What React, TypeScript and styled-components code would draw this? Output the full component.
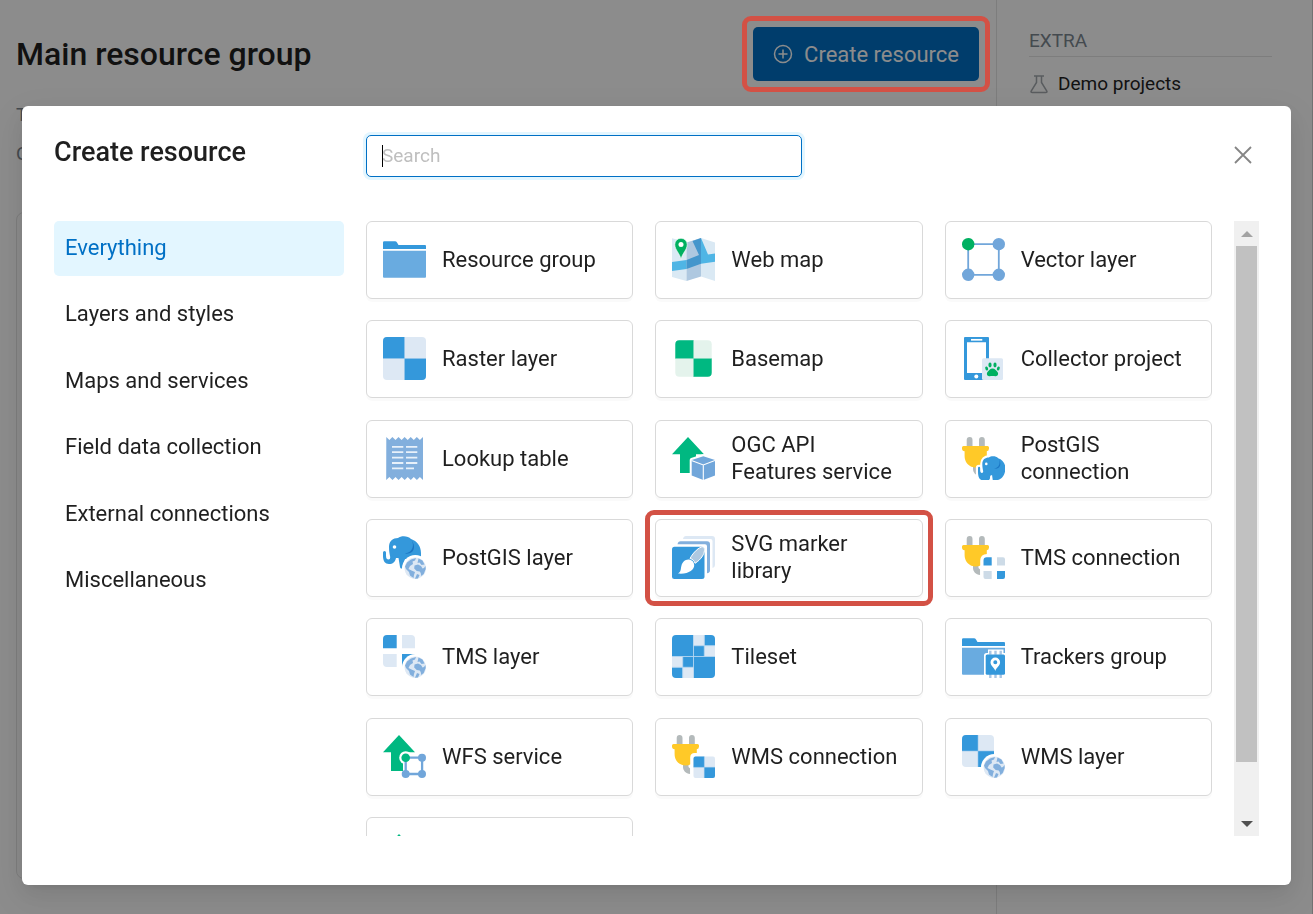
import React, { useRef } from "react";
import styled, { createGlobalStyle } from "styled-components";

const GlobalStyle = createGlobalStyle`
  *, *::before, *::after { box-sizing: border-box; }
  body {
    margin: 0;
    background: #fff;
    color: #1f1f1f;
    font-family: Roboto, "Liberation Sans", sans-serif;
    font-size: 22px;
    line-height: 27px;
  }
  button, input { font: inherit; color: inherit; }
`;

/* ---------- page behind the dialog ---------- */

const Page = styled.div`
  display: flex;
  min-height: 100vh;
  border-right: 1px solid #d0d0d0;
`;

const Main = styled.main`
  flex: 1;
  display: flex;
  flex-direction: column;
  padding: 27px 17px 35px 16px;
  border-right: 1px solid #e4e4e4;
`;

const PageHeader = styled.header`
  display: flex;
  justify-content: space-between;
  align-items: center;
`;

const PageTitle = styled.h1`
  margin: 0;
  font-size: 32px;
  line-height: 40px;
  font-weight: 500;
`;

const Highlighted = styled.div`
  position: relative;
`;

const HighlightRing = styled.span<{ $x: number; $y: number }>`
  position: absolute;
  z-index: 3;
  inset: ${({ $x, $y }) => `-${$y}px -${$x}px`};
  border: 5px solid #d35145;
  border-radius: 9px;
  pointer-events: none;
`;

const PrimaryButton = styled.button`
  display: flex;
  align-items: center;
  gap: 11px;
  height: 54px;
  padding: 0 20px;
  border: 0;
  border-radius: 5px;
  background: #0070c5;
  color: #fff;
`;

const Details = styled.dl`
  display: flex;
  flex-direction: column;
  gap: 12px;
  margin: 20px 0 0;
  font-size: 19px;
  color: #7c8790;
`;

const ContentPanel = styled.section`
  flex: 1;
  margin-top: 45px;
  border: 1px solid #e4e4e4;
  border-radius: 8px;
`;

const Aside = styled.aside`
  width: 315px;
  padding: 27px 40px 0 32px;
  font-size: 19px;
`;

const AsideTitle = styled.h2`
  margin: 0 0 13px;
  padding-bottom: 2px;
  border-bottom: 1px solid #e4e4e4;
  font-size: 19px;
  font-weight: 400;
  color: #7c8790;
`;

const AsideLink = styled.a`
  display: flex;
  align-items: center;
  gap: 9px;
  color: inherit;
  text-decoration: none;
`;

/* ---------- dialog ---------- */

const Overlay = styled.div`
  position: fixed;
  inset: 0;
  z-index: 1;
  display: flex;
  padding: 106px 22px 29px;
  background: rgba(0, 0, 0, 0.45);
`;

const Dialog = styled.div`
  flex: 1;
  min-width: 0;
  display: flex;
  flex-direction: column;
  gap: 44px;
  padding: 29px 32px 49px;
  border-radius: 6px;
  background: #fff;
  box-shadow: 0 8px 22px rgba(0, 0, 0, 0.08), 0 4px 8px -5px rgba(0, 0, 0, 0.12),
    0 12px 38px 11px rgba(0, 0, 0, 0.05);
`;

const DialogHeader = styled.header`
  display: grid;
  grid-template-columns: 290px 436px 1fr;
  column-gap: 22px;
`;

const DialogTitle = styled.h2`
  margin: 0;
  font-size: 27px;
  line-height: 34px;
  font-weight: 500;
`;

const SearchBox = styled.div`
  position: relative;
`;

const SearchInput = styled.input`
  display: block;
  width: 100%;
  height: 42px;
  padding: 0 15px 2px;
  border: 1px solid #0070c5;
  border-radius: 5px;
  outline: 0;
  box-shadow: 0 0 0 3px #e3f6ff;
  font-size: 19px;
  &::placeholder { color: #bfbfbf; opacity: 1; }
`;

const Caret = styled.span`
  position: absolute;
  left: 16px;
  top: 10px;
  width: 1px;
  height: 22px;
  background: #000;
`;

const CloseButton = styled.button`
  justify-self: end;
  display: grid;
  place-items: center;
  width: 32px;
  height: 40px;
  padding: 0;
  border: 0;
  background: none;
  color: #858585;
`;

const DialogBody = styled.div`
  flex: 1;
  min-height: 0;
  display: flex;
  gap: 22px;
`;

const Categories = styled.nav`
  display: flex;
  flex-direction: column;
  justify-content: space-between;
  width: 290px;
  height: 387px;
`;

const Category = styled.button<{ $active?: boolean }>`
  height: 55px;
  padding: 0 11px 2px;
  border: 0;
  border-radius: 5px;
  text-align: left;
  background: ${({ $active }) => ($active ? "#e3f6ff" : "none")};
  color: ${({ $active }) => ($active ? "#0070c5" : "inherit")};
`;

const Scroller = styled.div`
  flex: 1;
  overflow-y: auto;
  scrollbar-width: none;
`;

const CardGrid = styled.div`
  display: grid;
  grid-template-columns: repeat(3, minmax(0, 1fr));
  grid-auto-rows: 78px;
  column-gap: 22px;
  align-content: space-between;
  height: 674px;
`;

const Card = styled.button`
  position: relative;
  display: flex;
  align-items: center;
  gap: 16px;
  padding: 0 20px 1px 16px;
  border: 1px solid #d9d9d9;
  border-radius: 6px;
  background: #fff;
  box-shadow: 0 3px 0 rgba(0, 0, 0, 0.02);
  text-align: left;
`;

const CardIcon = styled.svg`
  flex: none;
  width: 43px;
  height: 43px;
`;

const Scrollbar = styled.div`
  display: flex;
  flex-direction: column;
  width: 25px;
  background: #f0f0f0;
`;

const ScrollArrow = styled.button`
  display: grid;
  place-items: center;
  height: 25px;
  padding: 0;
  border: 0;
  background: none;
`;

const ScrollTrack = styled.div`
  flex: 1;
  display: flex;
  padding: 0 2px 49px;
`;

const ScrollThumb = styled.div`
  flex: 1;
  background: #c1c1c1;
`;

/* ---------- icon drawings, on a 43 unit canvas ---------- */

const BLUE = "#3498db";
const PALE = "#dde8f4";
const SOFT = "#71a6da";
const GREEN = "#00b881";

const Folder = () => (
  <>
    <path fill={BLUE} d="M0 11V4.5Q0 3.2 1.3 3.2H12q1.300 0 2 1.300L15.500 7H42q1 0 1 1v3z" />
    <path fill="#69abe0" d="M0 12.700h43V38.700q0 1-1 1H1q-1 0-1-1z" />
  </>
);

const Tiles = ({ x = 0, y = 0, size = 43, r = 4, dark = BLUE, light = PALE, line = "#93c4ea" }) => {
  const h = size / 2;
  return (
    <g transform={`translate(${x} ${y})`}>
      <rect width={size} height={size} rx={r} fill={light} />
      <path fill={dark} d={`M0 ${h}V${r}Q0 0 ${r} 0H${h}V${size}H${size - r}Q${size} ${size} ${size} ${size - r}V${h}z`} />
      <path stroke={line} strokeWidth={size / 54} d={`M${h} 0V${size}M0 ${h}H${size}`} />
    </g>
  );
};

const Globe = () => (
  <>
    <circle cx="32.300" cy="32.300" r="13.300" fill="#fff" />
    <circle cx="32.300" cy="32.300" r="10.700" fill={PALE} />
    <path
      fill="#82afdd"
      d="M24 26.500l4-3 5-1.500-1 2.500-2.500 1 .5 2.500-3 2-1.500 3 3 1.500 3.500 1.500-1 3-.5 3-3.500-2.500-1-3.500-3-3-1-2.500zM35.500 22.500l4 2 2 4-3 .5-2-2.500-2 .5zM31.500 29.500l3.500-1 3 1.500 1.500 2.500 1.500-.5 1.500-2 .2 3-2 5-2.500 2-.5-3-1-1.500-3-.5-2.500-2.500zM34 38l2.500 1-1.500 3.500-3 .3z"
    />
  </>
);

const ELEPHANT =
  "M0 16.500a1.500 1.500 0 0 1 3 0v3c0 3 1 4 2.500 4s2-1 1.500-3.500C6.500 17 6 15 6 11C6 5 10 2 15 2C18-.5 25-.5 28 3C34 5 38 10 38 17";

const ElephantFace = () => (
  <>
    <path fill="#1b76c4" d="M27.500 2.800c5 6 2 14-5.500 14.700 7.500 1.500 13-5.500 5.500-14.700z" />
    <circle cx="11.500" cy="11" r="1.800" fill="#fff" />
  </>
);

const Plug = () => (
  <>
    <path fill="#b4babb" d="M4.700 10V3a2.900 2.900 0 0 1 5.800 0v7zM17 10V3a2.900 2.900 0 0 1 5.800 0v7zM11 29.500h5.500v2.500l1.700 1.500v5.500c-4.500-.5-7.200-3.500-7.200-7z" />
    <path fill="#ffc928" d="M1.500 9h24a1.500 1.500 0 0 1 1.500 1.500v1q0 2.500-2.200 2.700V19c0 7-5 11.500-11.100 11.500S2.600 26 2.600 19v-4.800Q0 14 0 11.500v-1A1.500 1.500 0 0 1 1.500 9z" />
  </>
);

const Arrow = () => <path fill={GREEN} d="M16 0l16 17.300h-8V36H8V17.300H0z" />;

const ICONS: Record<string, React.ReactNode> = {
  folder: <Folder />,
  webmap: (
    <>
      <path fill="#dae9f4" d="M0 .3L14.500 4v39L0 39zM29 0l14 4.500V43l-14-4.500z" />
      <path fill="#aec8e0" d="M14.500 4.500L29 0v38.500L14.500 43z" />
      <path fill="#4fb5e5" d="M0 24l14.500-2v9L0 33zM29 0l7 16.500 7-1v8.300l-14 2z" />
      <path fill="#4496cc" d="M20.500 3L29 0v25.700L14.500 31v-9L27 17z" />
      <path fill="#00b061" stroke="#fff" strokeWidth=".6" d="M9 21.500C8 15.500 2.800 12 2.800 6.500a6.200 6.200 0 0 1 12.400 0C15.200 12 10 15.500 9 21.500z" />
      <circle cx="9" cy="6.500" r="2.500" fill="#fff" />
    </>
  ),
  vector: (
    <>
      <path fill="none" stroke={SOFT} strokeWidth="1.800" d="M6.200 6.200h30.600v30.600H6.200z" />
      <path stroke={SOFT} strokeWidth="12.400" strokeLinecap="round" d="M36.800 6.200h0M6.200 36.800h0M36.800 36.800h0" />
      <circle cx="6.200" cy="6.200" r="6.200" fill="#00b061" />
    </>
  ),
  raster: <Tiles />,
  basemap: <Tiles x={3.3} y={3.3} size={36.4} dark={GREEN} light="#e4f3ec" line="#7fd8bb" />,
  collector: (
    <>
      <path fill={BLUE} fillRule="evenodd" d="M3 0h23q1 0 1 1v41q0 1-1 1H3q-1 0-1-1V1q0-1 1-1zM5 5.300V36h19V5.300z" />
      <path stroke="#fff" strokeWidth="1.700" d="M9 2.800h11.300" />
      <circle cx="14.300" cy="39.600" r="2" fill="#fff" />
      <rect x="20" y="21.300" width="21" height="21.700" rx="1.500" fill={PALE} />
      <g fill="#00b061">
        <path d="M30.500 31.500c2.500 0 3.500 2 5 3.500 1.500 2 0 4.500-2 4.200-2-.4-4-.4-6 0-2 .3-3.500-2.200-2-4.200 1.500-1.500 2.500-3.500 5-3.500z" />
        <ellipse cx="28" cy="28" rx="1.600" ry="2.400" />
        <ellipse cx="33" cy="28" rx="1.600" ry="2.400" />
        <ellipse cx="24.700" cy="31.500" rx="1.400" ry="2" transform="rotate(-20 24.700 31.500)" />
        <ellipse cx="36.300" cy="31.500" rx="1.400" ry="2" transform="rotate(20 36.300 31.500)" />
      </g>
    </>
  ),
  lookup: (
    <>
      <path
        fill="#82afdd"
        d="M3.300 0l3.100 3 3-3 3.100 3 3-3 3.100 3 3-3 3.100 3 3-3 3.100 3 3-3 3.100 3L40 0v43l-3.100-3-3 3-3.100-3-3 3-3.100-3-3 3-3.100-3-3 3-3.100-3-3 3-3.100-3-3.200 3z"
      />
      <path stroke="#e8f1fa" strokeWidth="1.800" d="M9 9.800h11.300M23 9.800h11.300M9 15.200h11.300M23 15.200h11.300M9 20.600h11.300M23 20.600h11.300M9 26h11.300M23 26h11.300M9 31.400h11.300M23 31.400h8" />
    </>
  ),
  ogc: (
    <>
      <Arrow />
      <path fill={SOFT} stroke="#fff" strokeWidth="4" strokeLinejoin="round" d="M31.300 19.200L43 23v15.500L31.300 43 19.700 38.500V23z" />
      <path fill={SOFT} d="M31.300 19.200L43 23v15.500L31.300 43 19.700 38.500V23z" />
      <path fill="none" stroke="#fff" strokeWidth="1.100" d="M19.500 23.500L31.300 28 43 23.500M31.300 28v15" />
    </>
  ),
  postgisConnection: (
    <>
      <Plug />
      <g transform="translate(16 19) scale(.72)">
        <path fill={BLUE} stroke="#fff" strokeWidth="6" d={ELEPHANT + "C38 25 35 32 24 33H20v-5h-3v5h-6c-7 1-11-3-11-10z"} />
        <path fill={BLUE} d={ELEPHANT + "C38 26 33 33.500 25 33.500H20.500l-1-7-2.500 1-.5 4q-.5 2-2.500 2H6C2 33.500 0 29 0 22z"} />
        <ElephantFace />
      </g>
    </>
  ),
  postgisLayer: (
    <>
      <path fill={BLUE} d={ELEPHANT + "v6H22l-2 8c-.5 2-2.500 2-3 0L15.500 22H13c-1 4-3 6-7 6C2 28 0 25 0 20z"} />
      <ElephantFace />
      <Globe />
    </>
  ),
  svgLibrary: (
    <>
      <path fill={PALE} d="M11 3q.5-3 3-3H40q3 0 3 3v26q0 2.500-2.500 3V5q0-2-2-2z" />
      <path fill="#82afdd" d="M5.500 8.300q.5-3 3-3H35q3 0 3 3v26q0 2.500-3 3V10.300q0-2-2-2z" />
      <rect y="10.700" width="32.500" height="32.300" rx="2.500" fill={BLUE} />
      <path fill="#aec8e0" stroke="#fff" strokeWidth="1" d="M18 22.500C21.500 16 27 11 31 10.700c2.500 1.300 1.500 6.300-.5 9.300-1.800 3-4.500 5.500-7.500 7.300-.5-2.300-2.500-4.300-5-4.800z" />
      <path fill="#fff" d="M17.200 23.500c3 .5 4.800 2.500 5 5.500.2 5-6 9.500-16.200 8.500 3.200-1.500 2.500-4.500 3.500-8 1-3.500 3.700-6.500 7.700-6z" />
    </>
  ),
  tmsConnection: (
    <>
      <Plug />
      <path fill="#fff" d="M18.200 43V25q0-7 7-7H43v25z" />
      <path fill={BLUE} d="M21.500 29.500v-5q0-3.200 3.200-3.200h5v8.200zM35 35h8v6q0 2-2 2h-6z" />
      <path fill="#cddbe7" d="M35 21.300h6q2 0 2 2v6.200h-8zM21.500 35h8.200v8h-6.200q-2 0-2-2z" />
    </>
  ),
  tmsLayer: (
    <>
      <path fill={BLUE} d="M0 13.300V4Q0 0 4 0h9.700v13.300zM19 19h13v13H19z" />
      <path fill={PALE} d="M19 0h9q4 0 4 4v9.300H19zM0 19h13.700v13H4q-4 0-4-4z" />
      <Globe />
    </>
  ),
  tileset: (
    <>
      <rect width="43" height="43" rx="4" fill={BLUE} />
      <path fill={PALE} d="M21 0h11.300v10.700H21zM32.300 10.700H43v10.800H32.300zM0 21.500h10.700v10.800H0zM10.700 32.300H22V43H10.700z" />
      <path stroke="#b5d6f0" strokeWidth=".9" d="M21.500 0v43M0 21.500h43M32.300 0v21.500M21.500 10.700H43M10.700 21.500V43M0 32.300h21.500" />
    </>
  ),
  trackers: (
    <>
      <Folder />
      <path fill="#fff" d="M22 43V20.500q0-2.500 2.500-2.500h1.500v-3.500h15.500V18H43v25z" />
      <path stroke="#a9c6e4" strokeWidth="2.400" d="M28.300 15.800v4M33.500 15.800v4M38.700 15.800v4M28.300 39v4M33.500 39v4M38.700 39v4" />
      <rect x="23.700" y="19.500" width="19.300" height="20.200" rx="1.500" fill={BLUE} />
      <path fill="#fff" fillRule="evenodd" d="M33.300 36c-.8-3-4.800-5-4.800-8.700a4.800 4.800 0 0 1 9.600 0c0 3.700-4 5.700-4.800 8.700zm0-10.700a2 2 0 1 0 0 4 2 2 0 0 0 0-4z" />
    </>
  ),
  wfs: (
    <>
      <Arrow />
      <path fill="#fff" d="M22.700 22.700H43V43H20V27z" />
      <circle cx="22.700" cy="22.700" r="6.500" fill="#fff" />
      <path fill="none" stroke={SOFT} strokeWidth="2.300" d="M22.700 22.700h16.400V39H22.700z" />
      <path stroke={SOFT} strokeWidth="8" strokeLinecap="round" d="M39 22.700h0M22.700 39h0M39 39h0" />
      <circle cx="22.700" cy="22.700" r="4.300" fill={GREEN} />
    </>
  ),
  wmsConnection: (
    <>
      <Plug />
      <path fill="#fff" d="M18.200 43V22.500q0-4.500 4.500-4.500H43v25z" />
      <Tiles x={21.5} y={21.5} size={21.5} r={2} />
    </>
  ),
  wmsLayer: (
    <>
      <Tiles size={32} />
      <Globe />
    </>
  ),
  wms: <Arrow />,
};

const RESOURCES: { label: string; icon: string; highlighted?: boolean }[] = [
  { label: "Resource group", icon: "folder" },
  { label: "Web map", icon: "webmap" },
  { label: "Vector layer", icon: "vector" },
  { label: "Raster layer", icon: "raster" },
  { label: "Basemap", icon: "basemap" },
  { label: "Collector project", icon: "collector" },
  { label: "Lookup table", icon: "lookup" },
  { label: "OGC API Features service", icon: "ogc" },
  { label: "PostGIS connection", icon: "postgisConnection" },
  { label: "PostGIS layer", icon: "postgisLayer" },
  { label: "SVG marker library", icon: "svgLibrary", highlighted: true },
  { label: "TMS connection", icon: "tmsConnection" },
  { label: "TMS layer", icon: "tmsLayer" },
  { label: "Tileset", icon: "tileset" },
  { label: "Trackers group", icon: "trackers" },
  { label: "WFS service", icon: "wfs" },
  { label: "WMS connection", icon: "wmsConnection" },
  { label: "WMS layer", icon: "wmsLayer" },
  { label: "WMS service", icon: "wms" },
];

const CATEGORIES = [
  "Everything",
  "Layers and styles",
  "Maps and services",
  "Field data collection",
  "External connections",
  "Miscellaneous",
];

export default function App() {
  const scroller = useRef<HTMLDivElement>(null);
  const scrollBy = (top: number) => scroller.current?.scrollBy({ top });

  return (
    <>
      <GlobalStyle />
      <Page>
        <Main>
          <PageHeader>
            <PageTitle>Main resource group</PageTitle>
            <Highlighted>
              <PrimaryButton type="button">
                <svg width="20" height="20" viewBox="0 0 20 20" fill="none" stroke="currentColor" strokeWidth="1.500" aria-hidden="true">
                  <circle cx="10" cy="10" r="8.500" />
                  <path d="M10 5.500v9M5.500 10h9" />
                </svg>
                Create resource
              </PrimaryButton>
              <HighlightRing $x={11} $y={11} />
            </Highlighted>
          </PageHeader>
          <Details>
            <dt>Type</dt>
            <dt>Owner</dt>
          </Details>
          <ContentPanel />
        </Main>
        <Aside>
          <AsideTitle>EXTRA</AsideTitle>
          <AsideLink href="#demo">
            <svg width="20" height="20" viewBox="0 0 20 20" fill="none" stroke="#a3a8ad" strokeWidth="1.500" aria-hidden="true">
              <path d="M5 2h10M7.500 2v6.500L2.200 17q-.7 1.500 1 1.500h13.600q1.700 0 1-1.500L12.500 8.500V2" />
            </svg>
            Demo projects
          </AsideLink>
        </Aside>
      </Page>

      <Overlay>
        <Dialog role="dialog" aria-modal="true" aria-labelledby="dialog-title">
          <DialogHeader>
            <DialogTitle id="dialog-title">Create resource</DialogTitle>
            <SearchBox>
              <SearchInput type="text" placeholder="Search" aria-label="Search" />
              <Caret />
            </SearchBox>
            <CloseButton type="button" aria-label="Close">
              <svg width="18" height="18" viewBox="0 0 18 18" stroke="currentColor" strokeWidth="1.800" aria-hidden="true">
                <path d="M1 1l16 16M17 1L1 17" />
              </svg>
            </CloseButton>
          </DialogHeader>
          <DialogBody>
            <Categories>
              {CATEGORIES.map((name, i) => (
                <Category key={name} type="button" $active={i === 0}>
                  {name}
                </Category>
              ))}
            </Categories>
            <Scroller ref={scroller}>
              <CardGrid>
                {RESOURCES.map(({ label, icon, highlighted }) => (
                  <Card key={label} type="button">
                    <CardIcon viewBox="0 0 43 43" aria-hidden="true">
                      {ICONS[icon]}
                    </CardIcon>
                    <span>{label}</span>
                    {highlighted && <HighlightRing $x={11} $y={10} />}
                  </Card>
                ))}
              </CardGrid>
            </Scroller>
            <Scrollbar>
              <ScrollArrow type="button" aria-label="Scroll up" onClick={() => scrollBy(-60)}>
                <svg width="12" height="6" viewBox="0 0 12 6" aria-hidden="true">
                  <path fill="#a3a3a3" d="M6 0l6 6H0z" />
                </svg>
              </ScrollArrow>
              <ScrollTrack>
                <ScrollThumb />
              </ScrollTrack>
              <ScrollArrow type="button" aria-label="Scroll down" onClick={() => scrollBy(60)}>
                <svg width="12" height="6" viewBox="0 0 12 6" aria-hidden="true">
                  <path fill="#505050" d="M0 0h12L6 6z" />
                </svg>
              </ScrollArrow>
            </Scrollbar>
          </DialogBody>
        </Dialog>
      </Overlay>
    </>
  );
}
